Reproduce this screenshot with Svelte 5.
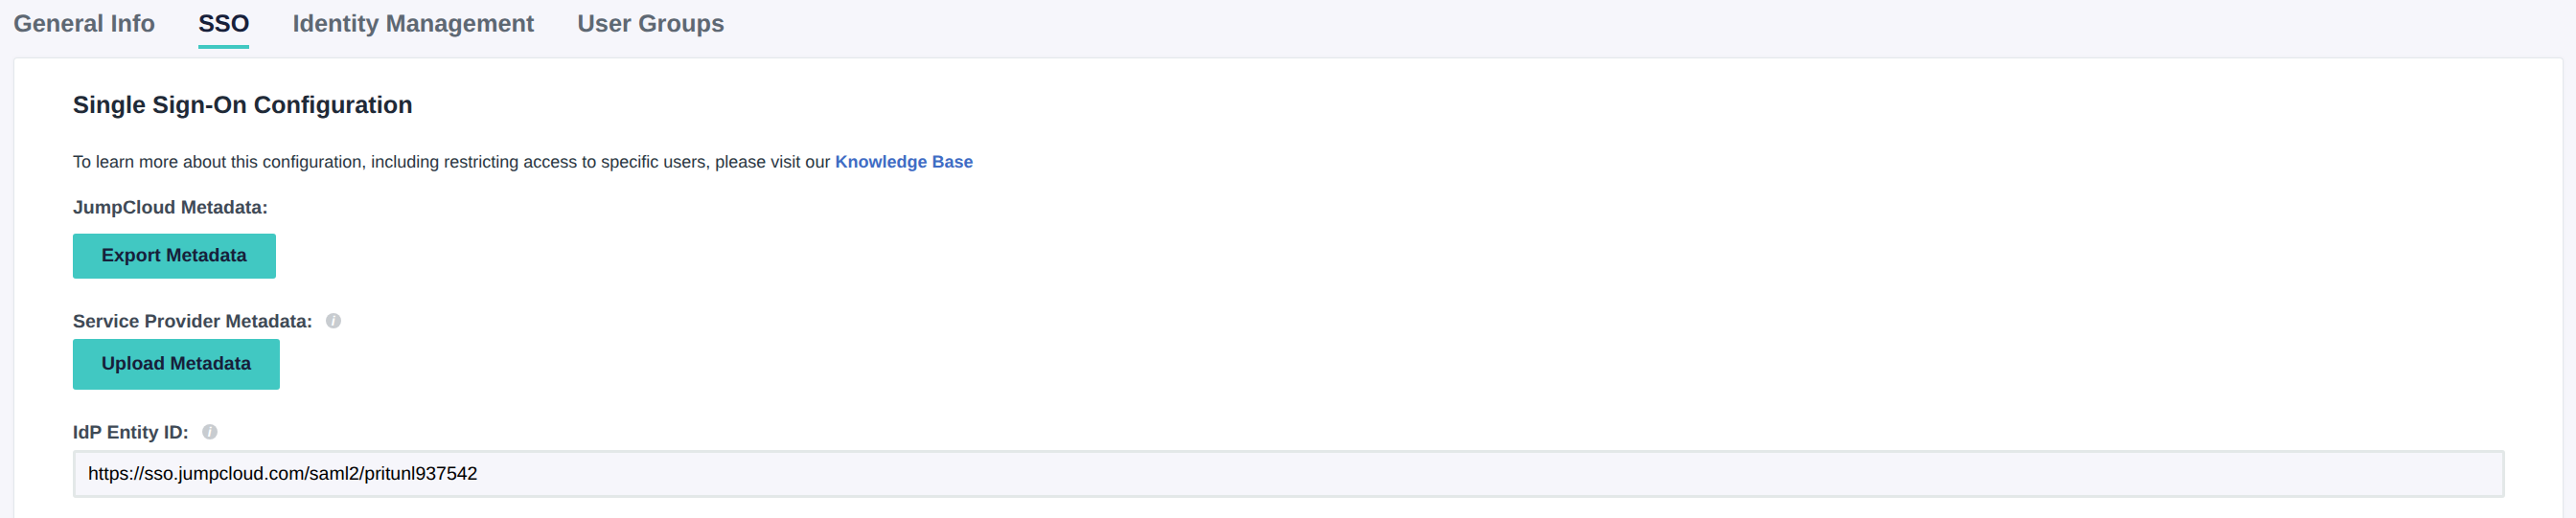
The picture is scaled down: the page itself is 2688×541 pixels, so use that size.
<script lang="ts">
  const tabs = ["General Info", "SSO", "Identity Management", "User Groups"];
  let active = $state("SSO");
</script>

{#snippet info()}
  <svg class="info" viewBox="0 0 16 16" aria-hidden="true">
    <circle cx="8" cy="8" r="8" fill="#c8ccd0" />
    <text x="7.6" y="13" text-anchor="middle" class="info-i">i</text>
  </svg>
{/snippet}

<div class="page">
  <nav class="tabs">
    {#each tabs as tab}
      <button type="button" class="tab" class:active={active === tab} onclick={() => (active = tab)}>{tab}</button>
    {/each}
  </nav>

  <section class="card">
    <h2>Single Sign-On Configuration</h2>
    <p class="intro">
      To learn more about this configuration, including restricting access to specific users, please visit our
      <a href="#kb">Knowledge Base</a>
    </p>

    <div class="label first">JumpCloud Metadata:</div>
    <button type="button" class="action export">Export Metadata</button>

    <div class="label provider">Service Provider Metadata: {@render info()}</div>
    <button type="button" class="action upload">Upload Metadata</button>

    <div class="label entity">IdP Entity ID: {@render info()}</div>
    <input type="text" readonly value="https://sso.jumpcloud.com/saml2/pritunl937542" />
  </section>
</div>

<style>
  :global(body) {
    background: #f6f6fb;
    overflow: hidden;
  }

  .page {
    height: 541px;
    overflow: hidden;
    font-family: "Liberation Sans", Arial, sans-serif;
    text-rendering: geometricPrecision;
    color: #1a2433;
  }

  .tabs {
    display: flex;
    gap: 45px;
    height: 51px;
    padding-left: 14px;
  }

  .tab {
    height: 51px;
    padding: 4px 0 0;
    border: 0;
    border-bottom: 4px solid transparent;
    background: none;
    font: bold 25.35px "Liberation Sans", Arial, sans-serif;
    text-rendering: geometricPrecision;
    color: #5e6873;
  }

  .tab.active {
    color: #17203a;
    border-bottom-color: #41c8c2;
  }

  .card {
    margin: 9px 13px 0 14px;
    height: 600px;
    padding: 0 61px;
    background: #fff;
    border: 1px solid #e4e8ec;
    border-bottom: 0;
    border-radius: 4px 4px 0 0;
    box-shadow: 0 0 4px rgba(0, 0, 0, 0.04);
  }

  h2 {
    margin: 33px 0 0;
    font-size: 25.35px;
    line-height: 32px;
    color: #1f2a37;
  }

  .intro {
    margin: 31px 0 0;
    font-size: 18px;
    line-height: 24px;
    color: #2b3743;
  }

  .intro a {
    font-weight: bold;
    color: #3f6cc4;
    text-decoration: none;
  }

  .label {
    display: flex;
    align-items: center;
    gap: 14px;
    font-size: 19.5px;
    font-weight: bold;
    line-height: 24px;
    color: #3f4a56;
  }

  .label.first {
    margin-top: 24px;
  }

  .label.provider {
    margin-top: 33px;
  }

  .label.entity {
    margin-top: 33px;
  }

  .info {
    width: 16px;
    height: 16px;
    margin-top: -2px;
  }

  .info-i {
    font: italic bold 14px "Liberation Sans", sans-serif;
    fill: #fff;
  }

  .action {
    display: block;
    padding: 0 30px;
    border: 0;
    border-radius: 3px;
    background: #41c8c2;
    font: bold 19.5px "Liberation Sans", Arial, sans-serif;
    text-rendering: geometricPrecision;
    color: #17203a;
  }

  .export {
    height: 47px;
    margin-top: 15px;
  }

  .upload {
    height: 53px;
    margin-top: 6px;
  }

  input {
    display: block;
    box-sizing: border-box;
    width: 2538px;
    height: 50px;
    margin-top: 6px;
    padding: 0 13px;
    border: 3px solid #e3e8e8;
    border-radius: 3px;
    outline: none;
    background: #f6f6fb;
    font: 19.5px "Liberation Sans", Arial, sans-serif;
    text-rendering: geometricPrecision;
    color: #000;
  }
</style>
